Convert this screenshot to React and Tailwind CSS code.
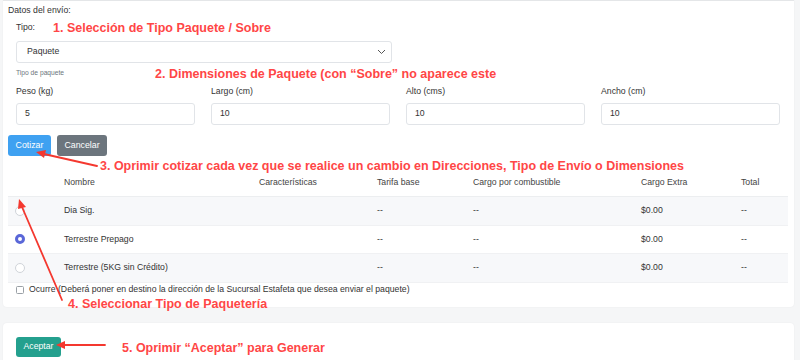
import React from "react";

const font = { fontFamily: '"Liberation Sans", Arial, sans-serif' };

const rows = [
  { name: "Dia Sig.", checked: false, bg: "bg-[#f7f8fa]" },
  { name: "Terrestre Prepago", checked: true, bg: "bg-white" },
  { name: "Terrestre (5KG sin Crédito)", checked: false, bg: "bg-[#f7f8fa]" },
];

const fields = [
  { label: "Peso (kg)", value: "5" },
  { label: "Largo (cm)", value: "10" },
  { label: "Alto (cms)", value: "10" },
  { label: "Ancho (cm)", value: "10" },
];

const cols = "grid grid-cols-[48px_195px_118px_96px_168px_100px_1fr]";

const Radio = ({ checked }) =>
  checked ? (
    <span className="block w-[10px] h-[10px] rounded-full border-[3px] border-[#5a67d8] bg-white" />
  ) : (
    <span className="block w-[10px] h-[10px] rounded-full border border-[#d0d4d9] bg-white" />
  );

const Note = ({ children, className = "" }) => (
  <span className={"text-[12.5px] font-bold text-[#ff4646] whitespace-nowrap leading-none " + className}>
    {children}
  </span>
);

export default function App() {
  return (
    <div className="relative w-[800px] h-[360px] overflow-hidden bg-[#f5f6f7] pl-[3px] pr-[6px] text-[#333]" style={font}>
      {/* card 1 */}
      <div className="bg-white border-t border-[#e4e6e8] rounded-b-[4px] shadow-[0_0_2px_rgba(0,0,0,0.06)] pl-[5px] pr-[5px] pb-[11px]">
        <div className="pt-[3px] h-[16px] text-[8.7px] leading-[12px]">Datos del envío:</div>

        <div className="pl-[8px] pr-[9px]">
          <div className="mt-[2px] h-[18px] flex items-center">
            <span className="text-[8.7px] w-[37px]">Tipo:</span>
            <Note>1. Selección de Tipo Paquete / Sobre</Note>
          </div>

          <div className="mt-[4px] h-[22px] w-[376px] border border-[#e1e4e8] rounded-[3px] flex items-center justify-between pl-[10px] pr-[5px]">
            <span className="text-[8.7px]">Paquete</span>
            <svg width="9" height="6" viewBox="0 0 9 6" fill="none">
              <path d="M1 1l3.5 3.5L8 1" stroke="#555" strokeWidth="1" />
            </svg>
          </div>

          <div className="mt-[1px] h-[18px] flex items-center">
            <span className="text-[6.7px] text-[#6c757d] w-[139px]">Tipo de paquete</span>
            <Note className="mt-[2px]">2. Dimensiones de Paquete (con “Sobre” no aparece este</Note>
          </div>

          <div className="mt-[3px] grid grid-cols-4 gap-x-[16px]">
            {fields.map((f) => (
              <div key={f.label}>
                <div className="h-[12px] text-[8.7px] leading-[12px]">{f.label}</div>
                <div className="mt-[6px] h-[22px] border border-[#e1e4e8] rounded-[3px] flex items-center pl-[8px] text-[8.7px]">
                  {f.value}
                </div>
              </div>
            ))}
          </div>
        </div>

        <div className="mt-[10px] flex gap-[6px]">
          <button className="h-[21px] w-[43px] rounded-[3px] bg-[#3fa1f1] text-white text-[8.8px]">Cotizar</button>
          <button className="h-[21px] w-[50px] rounded-[3px] bg-[#6c757d] text-white text-[8.8px]">Cancelar</button>
        </div>

        <div className="mt-[15px] w-[780px] text-[8.7px]">
          <div className={cols + " h-[26px] items-center border-b border-[#eceef0] text-[#444] pb-[2px]"}>
            <div />
            <div className="px-2">Nombre</div>
            <div className="px-2">Características</div>
            <div className="px-2">Tarifa base</div>
            <div className="px-2">Cargo por combustible</div>
            <div className="px-2">Cargo Extra</div>
            <div className="px-2">Total</div>
          </div>
          {rows.map((r) => (
            <div key={r.name} className={cols + " h-[28.5px] items-center border-b border-[#f0f1f3] " + r.bg}>
              <div className="pl-[7px]">
                <Radio checked={r.checked} />
              </div>
              <div className="px-2">{r.name}</div>
              <div className="px-2" />
              <div className="px-2">--</div>
              <div className="px-2">--</div>
              <div className="px-2">$0.00</div>
              <div className="px-2">--</div>
            </div>
          ))}
        </div>

        <div className="mt-[1px] h-[12px] flex items-center pl-[8px] text-[8.7px]">
          <span className="w-[8px] h-[8px] border border-[#9aa0a6] rounded-[1.5px] mr-[5px]" />
          Ocurre (Deberá poner en destino la dirección de la Sucursal Estafeta que desea enviar el paquete)
        </div>
      </div>

      {/* card 2 */}
      <div className="mt-[16px] h-[60px] bg-white rounded-[4px] shadow-[0_0_2px_rgba(0,0,0,0.06)] pt-[14px] pl-[13px] flex items-start">
        <button className="h-[20px] w-[45px] rounded-[3px] bg-[#24a08e] text-white text-[8.7px] font-medium">Aceptar</button>
        <Note className="ml-[61px] mt-[5px]">5. Oprimir “Aceptar” para Generar</Note>
      </div>

      {/* annotations over the content */}
      <Note className="absolute left-[100px] top-[160px]">
        3. Oprimir cotizar cada vez que se realice un cambio en Direcciones, Tipo de Envío o Dimensiones
      </Note>
      <Note className="absolute left-[68px] top-[298px]">4. Seleccionar Tipo de Paquetería</Note>

      <svg className="absolute left-0 top-0 pointer-events-none" width="800" height="360">
        <g stroke="#f4382f" strokeWidth="1.8" fill="#f4382f" strokeLinecap="round">
          <line x1="97" y1="166" x2="44" y2="154" />
          <polygon points="36,152 46,150 44,158" stroke="none" />
          <line x1="62" y1="300" x2="22" y2="207" />
          <polygon points="19,199 26,207 18,209" stroke="none" />
          <line x1="105" y1="345" x2="64" y2="345" />
          <polygon points="56,345 65,341 65,349" stroke="none" />
        </g>
      </svg>
    </div>
  );
}
